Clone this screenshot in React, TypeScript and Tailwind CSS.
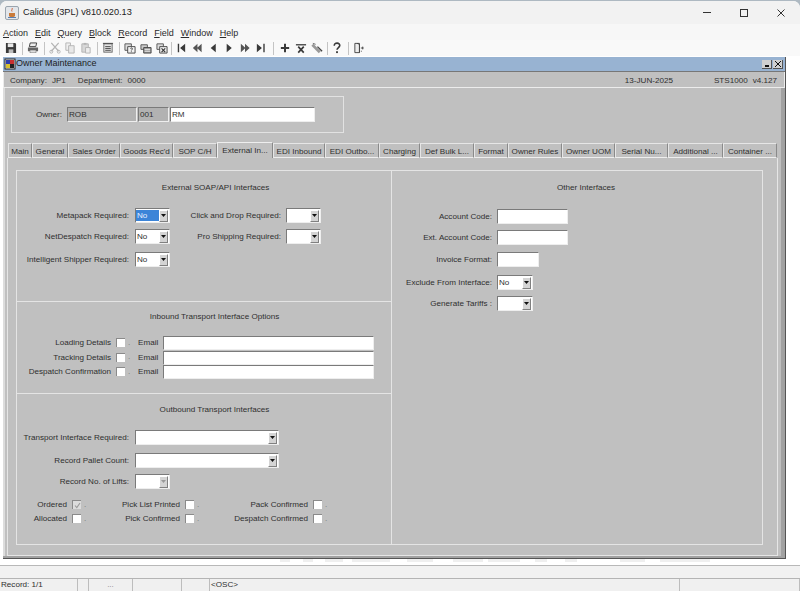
import type { ReactNode } from 'react'

const tabs = [
  { label: 'Main', width: 'w-[24px]' },
  { label: 'General', width: 'w-[36px]' },
  { label: 'Sales Order', width: 'w-[52px]' },
  { label: "Goods Rec'd", width: 'w-[53px]' },
  { label: 'SOP C/H', width: 'w-[44px]' },
  { label: 'External In...', width: 'w-[56px]', active: true },
  { label: 'EDI Inbound', width: 'w-[52px]' },
  { label: 'EDI Outbo...', width: 'w-[54px]' },
  { label: 'Charging', width: 'w-[41px]' },
  { label: 'Def Bulk L...', width: 'w-[54px]' },
  { label: 'Format', width: 'w-[34px]' },
  { label: 'Owner Rules', width: 'w-[54px]' },
  { label: 'Owner UOM', width: 'w-[53px]' },
  { label: 'Serial Nu...', width: 'w-[53px]' },
  { label: 'Additional ...', width: 'w-[55px]' },
  { label: 'Container ...', width: 'w-[54px]' },
]

const menus = ['Action', 'Edit', 'Query', 'Block', 'Record', 'Field', 'Window', 'Help']

function Ico({ children, w = 'w-[16px]' }: { children: ReactNode; w?: string }) {
  return (
    <div className={`${w} h-[16px] flex items-center justify-center shrink-0`}>
      <svg width="12" height="12" viewBox="0 0 13 13">
        {children}
      </svg>
    </div>
  )
}

function Sep({ w }: { w: string }) {
  return (
    <div className={`${w} h-[16px] flex items-center justify-center shrink-0`}>
      <div className="w-[1px] h-[13px] bg-[#c4c4c4]" />
    </div>
  )
}

function Toolbar() {
  const dark = '#3a3a3a'
  const off = '#b4b4b4'
  return (
    <div className="h-[16px] flex pl-[3px] bg-[#f9f9f9]">
      <Ico>
        <path d="M1 1h10l1 1v10H1z" fill={dark} />
        <rect x="3" y="1.500" width="6" height="4" fill="#e8e8e8" />
        <rect x="4" y="8" width="5" height="4" fill="#bbb" />
      </Ico>
      <Sep w="w-[6px]" />
      <Ico>
        <path d="M3.500 1h7l-1 4h-7z" fill="#eee" stroke={dark} />
        <path d="M1 6h11v4h-2v2H3v-2H1z" fill="#666" />
        <rect x="3.500" y="9" width="6" height="2.500" fill="#ddd" />
      </Ico>
      <Sep w="w-[6px]" />
      <Ico w="w-[15px]">
        <path d="M2.500 1l8 9M10.500 1l-8 9" stroke={off} strokeWidth="1.300" fill="none" />
        <circle cx="2.500" cy="10.500" r="1.600" fill="none" stroke={off} />
        <circle cx="10.500" cy="10.500" r="1.600" fill="none" stroke={off} />
      </Ico>
      <Ico>
        <path d="M2 1h5v8H2z" fill="#f0f0f0" stroke={off} />
        <path d="M5 4h6v8H5z" fill="#e8e8e8" stroke={off} />
      </Ico>
      <Ico>
        <path d="M2 2h7v9H2z" fill="#d8d8d8" stroke={off} />
        <rect x="4" y="1" width="3" height="2" fill={off} />
        <path d="M6 6h5v6H6z" fill="#eee" stroke={off} />
      </Ico>
      <Sep w="w-[6px]" />
      <Ico>
        <rect x="2" y="2" width="9" height="9" fill="#e4e4e4" stroke="#666" />
        <path d="M1 1.500h11M3.500 5h6M3.500 7h6M3.500 9h6" stroke="#444" fill="none" />
      </Ico>
      <Sep w="w-[6px]" />
      <Ico>
        <path d="M1 2h7v7H1z" fill="#ddd" stroke="#555" />
        <path d="M4 5h8v7H4z" fill="#f2f2f2" stroke="#444" />
        <path d="M7 7c1-1 2.500-.5 2 .8-.3.6-1 .6-1 1.400M8 10.200v.8" stroke="#333" fill="none" />
      </Ico>
      <Ico>
        <path d="M1 3h7v5H1z" fill="#ccc" stroke="#555" />
        <path d="M4 6h8v6H4z" fill="#999" stroke="#444" />
        <path d="M5 8h6M5 10h6" stroke="#eee" fill="none" />
      </Ico>
      <Ico>
        <path d="M1 2h7v6H1z" fill="#ddd" stroke="#555" />
        <path d="M4 5h8v7H4z" fill="#eee" stroke="#444" />
        <path d="M6 7l4 4M10 7l-4 4" stroke="#333" strokeWidth="1.200" fill="none" />
      </Ico>
      <Sep w="w-[3px]" />
      <Ico>
        <path d="M3 2h1.500v9H3zM11 2v9L5.500 6.500z" fill={dark} />
      </Ico>
      <Ico>
        <path d="M7 2v9L2 6.500zM11.500 2v9L6.500 6.500z" fill="#555" />
      </Ico>
      <Ico>
        <path d="M9.500 2v9L4 6.500z" fill={dark} />
      </Ico>
      <Ico>
        <path d="M4 2v9l5.500-4.500z" fill={dark} />
      </Ico>
      <Ico>
        <path d="M2 2v9l5-4.500zM6.500 2v9l5-4.500z" fill="#555" />
      </Ico>
      <Ico>
        <path d="M2 2v9l5.500-4.500zM9 2h1.500v9H9z" fill={dark} />
      </Ico>
      <Sep w="w-[8px]" />
      <Ico>
        <path d="M6.500 2v9M2 6.500h9" stroke={dark} strokeWidth="2.200" fill="none" />
      </Ico>
      <Ico>
        <path d="M1 3h11" stroke="#555" strokeWidth="1.500" fill="none" />
        <path d="M3.500 5l6 6.500M9.500 5l-6 6.500" stroke={dark} strokeWidth="1.800" fill="none" />
      </Ico>
      <Ico>
        <path d="M1.500 3l8 8" stroke="#999" strokeWidth="3" fill="none" />
        <path d="M7 5l5 5" stroke="#444" strokeWidth="1.500" fill="none" />
        <path d="M2 1.500l3 1" stroke="#666" fill="none" />
      </Ico>
      <Sep w="w-[4px]" />
      <Ico>
        <path d="M3.500 4c0-4 6.500-3.500 6 0-.3 2-3 2.200-3 4.500" stroke={dark} strokeWidth="1.700" fill="none" />
        <rect x="5.500" y="10" width="2" height="2" fill={dark} />
      </Ico>
      <Sep w="w-[6px]" />
      <Ico>
        <path d="M2 1.500h5v10H2z" fill="#eee" stroke="#444" />
        <path d="M4.500 1.500l2.500 1v9" stroke="#444" fill="none" />
        <path d="M8.500 6.500h3M10.500 5v3M8.500 10h1" stroke="#444" fill="none" />
      </Ico>
    </div>
  )
}

function Arrow({ disabled }: { disabled?: boolean }) {
  return (
    <div className="w-[9px] h-[12px] shrink-0 bg-[#d4d4d4] border-t border-l border-t-white border-l-white border-b border-r border-b-[#808080] border-r-[#808080] flex items-center justify-center">
      <svg width="5" height="3" viewBox="0 0 5 3">
        <path d="M0 0h5L2.500 3z" fill={disabled ? '#999' : '#111'} />
      </svg>
    </div>
  )
}

function Select({
  value,
  width,
  highlight,
  disabled,
}: {
  value?: string
  width: string
  highlight?: boolean
  disabled?: boolean
}) {
  return (
    <div
      className={`${width} h-[15px] shrink-0 flex items-center justify-between pr-[1px] bg-white border-t border-l border-t-[#7a7a7a] border-l-[#7a7a7a] border-b border-r border-b-[#eeeeee] border-r-[#eeeeee]`}
    >
      <div
        className={
          highlight
            ? 'h-[11px] w-[23px] bg-[#3b84d8] text-[#e8f0ff] pl-[1px] leading-[11px]'
            : 'pl-[1px] leading-[11px]'
        }
      >
        {value}
      </div>
      <Arrow disabled={disabled} />
    </div>
  )
}

function Input({
  width,
  value,
  bg = 'bg-white',
  height = 'h-[15px]',
}: {
  width: string
  value?: string
  bg?: string
  height?: string
}) {
  return (
    <div
      className={`${width} ${height} shrink-0 pl-[1px] leading-[13px] ${bg} border-t border-l border-t-[#7a7a7a] border-l-[#7a7a7a] border-b border-r border-b-[#eeeeee] border-r-[#eeeeee]`}
    >
      {value}
    </div>
  )
}

function Label({ width, children }: { width: string; children: ReactNode }) {
  return <div className={`${width} shrink-0 pt-[1px] text-right whitespace-nowrap`}>{children}</div>
}

function Check({ label, width, checked }: { label: string; width: string; checked?: boolean }) {
  return (
    <div className="flex items-center">
      <Label width={width}>{label}</Label>
      <div
        className={`ml-[5px] w-[9px] h-[9px] shrink-0 border-t border-l border-t-[#8a8a8a] border-l-[#8a8a8a] flex items-center justify-center ${
          checked ? 'bg-[#dcdcdc]' : 'bg-white'
        }`}
      >
        {checked && (
          <svg width="7" height="7" viewBox="0 0 7 7">
            <path d="M1 3.500l1.800 2L6 1" stroke="#9a9a9a" strokeWidth="1.100" fill="none" />
          </svg>
        )}
      </div>
      <div className="w-[8px] pl-[3px] text-[#777]">.</div>
    </div>
  )
}

function ExternalSection() {
  return (
    <div className="h-[131px] border-b border-[#e4e4e4]">
      <div className="pt-[11px] h-[37px] pl-[23px] text-center">External SOAP/API Interfaces</div>
      <div className="flex items-center h-[15px]">
        <Label width="w-[112px]">Metapack Required:</Label>
        <div className="ml-[6px]">
          <Select value="No" width="w-[35px]" highlight />
        </div>
        <Label width="w-[111px]">Click and Drop Required:</Label>
        <div className="ml-[5px]">
          <Select width="w-[35px]" />
        </div>
      </div>
      <div className="flex items-center h-[15px] mt-[6px]">
        <Label width="w-[112px]">NetDespatch Required:</Label>
        <div className="ml-[6px]">
          <Select value="No" width="w-[35px]" />
        </div>
        <Label width="w-[111px]">Pro Shipping Required:</Label>
        <div className="ml-[5px]">
          <Select width="w-[35px]" />
        </div>
      </div>
      <div className="flex items-center h-[15px] mt-[8px]">
        <Label width="w-[112px]">Intelligent Shipper Required:</Label>
        <div className="ml-[6px]">
          <Select value="No" width="w-[35px]" />
        </div>
      </div>
    </div>
  )
}

function InboundSection() {
  const rows = ['Loading Details', 'Tracking Details', 'Despatch Confirmation']
  return (
    <div className="h-[92px] border-b border-[#e4e4e4]">
      <div className="pt-[9px] h-[34px] pl-[21px] text-center">Inbound Transport Interface Options</div>
      <div className="flex flex-col gap-[0.500px]">
        {rows.map((row) => (
          <div key={row} className="flex items-center h-[14px]">
            <Check label={row} width="w-[94px]" />
            <div className="ml-[5px] pt-[1px] w-[25px] shrink-0">Email</div>
            <Input width="w-[211px]" height="h-[14px]" />
          </div>
        ))}
      </div>
    </div>
  )
}

function OutboundSection() {
  return (
    <div className="h-[150px]">
      <div className="pt-[10px] h-[36px] pl-[21px] text-center">Outbound Transport Interfaces</div>
      <div className="flex items-center h-[15px]">
        <Label width="w-[112px]">Transport Interface Required:</Label>
        <div className="ml-[6px]">
          <Select width="w-[144px]" />
        </div>
      </div>
      <div className="flex items-center h-[15px] mt-[8px]">
        <Label width="w-[112px]">Record Pallet Count:</Label>
        <div className="ml-[6px]">
          <Select width="w-[144px]" />
        </div>
      </div>
      <div className="flex items-center h-[15px] mt-[6px]">
        <Label width="w-[112px]">Record No. of Lifts:</Label>
        <div className="ml-[6px]">
          <Select width="w-[35px]" disabled />
        </div>
      </div>
      <div className="flex items-center h-[14px] mt-[9px]">
        <Check label="Ordered" width="w-[50px]" checked />
        <Check label="Pick List Printed" width="w-[91px]" />
        <Check label="Pack Confirmed" width="w-[106px]" />
      </div>
      <div className="flex items-center h-[14px]">
        <Check label="Allocated" width="w-[50px]" />
        <Check label="Pick Confirmed" width="w-[91px]" />
        <Check label="Despatch Confirmed" width="w-[106px]" />
      </div>
    </div>
  )
}

function OtherInterfaces() {
  const labelWidth = 'w-[100px]'
  return (
    <div className="flex-1">
      <div className="pt-[11px] h-[38px] pl-[18px] text-center">Other Interfaces</div>
      <div className="flex items-center h-[15px]">
        <Label width={labelWidth}>Account Code:</Label>
        <div className="ml-[5px]">
          <Input width="w-[71px]" />
        </div>
      </div>
      <div className="flex items-center h-[15px] mt-[6px]">
        <Label width={labelWidth}>Ext. Account Code:</Label>
        <div className="ml-[5px]">
          <Input width="w-[71px]" />
        </div>
      </div>
      <div className="flex items-center h-[15px] mt-[7px]">
        <Label width={labelWidth}>Invoice Format:</Label>
        <div className="ml-[5px]">
          <Input width="w-[42px]" />
        </div>
      </div>
      <div className="flex items-center h-[15px] mt-[8px]">
        <Label width={labelWidth}>Exclude From Interface:</Label>
        <div className="ml-[5px]">
          <Select value="No" width="w-[36px]" />
        </div>
      </div>
      <div className="flex items-center h-[15px] mt-[6px]">
        <Label width={labelWidth}>Generate Tariffs :</Label>
        <div className="ml-[5px]">
          <Select width="w-[36px]" />
        </div>
      </div>
    </div>
  )
}

function InnerWindow() {
  return (
    <div className="w-[783px] h-[502px] flex flex-col border-r border-b border-r-[#555555] border-b-[#555555] bg-[#c0c0c0]">
      <div className="h-[15px] flex items-center bg-[#98b3d2] border-b border-[#777777] shrink-0">
        <svg width="12" height="12" viewBox="0 0 12 12" className="ml-[1px] shrink-0">
          <rect x="1" y="1" width="10" height="10" fill="#f4f4f4" stroke="#222" />
          <rect x="2" y="2" width="4" height="4" fill="#2f3fb0" />
          <rect x="6" y="2" width="4" height="4" fill="#c83030" />
          <rect x="2" y="6" width="4" height="4" fill="#d8c030" />
          <rect x="6" y="6" width="4" height="4" fill="#222" />
        </svg>
        <div className="text-[9px] text-[#222]">Owner Maintenance</div>
        <div className="ml-auto flex gap-[1px] pr-[2px]">
          <div className="w-[10px] h-[9px] bg-[#d0d0d0] border-r border-b border-[#555] flex items-end justify-center pb-[1px]">
            <div className="w-[4px] h-[2px] bg-[#111]" />
          </div>
          <div className="w-[10px] h-[9px] bg-[#d0d0d0] border-r border-b border-[#555] flex items-center justify-center">
            <svg width="6" height="6" viewBox="0 0 6 6">
              <path d="M0 0l6 6M6 0L0 6" stroke="#111" fill="none" />
            </svg>
          </div>
        </div>
      </div>

      <div className="h-[16px] shrink-0 flex items-center pt-[3px] pl-[6px] pr-[7px] border-b border-l border-r border-[#ececec]">
        <div>Company:</div>
        <div className="ml-[5px]">JP1</div>
        <div className="ml-[12px]">Department:</div>
        <div className="ml-[5px]">0000</div>
        <div className="ml-auto">13-JUN-2025</div>
        <div className="ml-[41px]">STS1000</div>
        <div className="ml-[5px]">v4.127</div>
      </div>

      <div className="flex-1 flex border-r-[4px] border-b-[2px] border-[#a2a2a2]">
        <div className="flex-1 pl-[1px] border-l-[2px] border-[#dddddd]">
          <div className="ml-[5px] mt-[8px] w-[333px] h-[37px] flex items-center border border-[#e2e2e2]">
            <Label width="w-[50px]">Owner:</Label>
            <div className="ml-[5px] flex gap-[1px]">
              <Input width="w-[70px]" value="ROB" bg="bg-[#b2b2b2]" />
              <Input width="w-[31px]" value="001" bg="bg-[#b2b2b2]" />
              <Input width="w-[145px]" value="RM" />
            </div>
          </div>

          <div className="mt-[9px] ml-[2px] flex h-[16px] items-end">
            {tabs.map((tab) => (
              <div
                key={tab.label}
                className={
                  tab.active
                    ? `${tab.width} h-[16px] shrink-0 text-center leading-[15px] whitespace-nowrap overflow-hidden bg-[#c0c0c0] border-t border-l border-[#eeeeee] border-r-[#888888] border-r`
                    : `${tab.width} h-[15px] shrink-0 text-center leading-[15px] whitespace-nowrap overflow-hidden bg-[#c0c0c0] border-t border-l border-[#e6e6e6] border-r border-r-[#8a8a8a] border-b border-b-[#eeeeee]`
                }
              >
                {tab.label}
              </div>
            ))}
          </div>

          <div className="ml-[1px] w-[771px] h-[398px] pl-[8px] pt-[12px] border-l border-r border-[#e6e6e6] border-b">
            <div className="w-[747px] h-[375px] flex border border-[#e4e4e4]">
              <div className="w-[375px] shrink-0 flex flex-col border-r border-[#e4e4e4]">
                <ExternalSection />
                <InboundSection />
                <OutboundSection />
              </div>
              <OtherInterfaces />
            </div>
          </div>
        </div>
      </div>
    </div>
  )
}

function StatusBar() {
  const cells = [
    { text: 'Record: 1/1', width: 'w-[78px]' },
    { text: '', width: 'w-[11px]' },
    { text: '...', width: 'w-[44px]', center: true },
    { text: '', width: 'w-[49px]' },
    { text: '', width: 'w-[28px]' },
    { text: '<OSC>', width: 'w-[470px]' },
    { text: '', width: 'flex-1' },
  ]
  return (
    <div className="h-[14px] flex bg-[#f0f0f0] border-t border-[#b4b4b4]">
      {cells.map((cell, i) => (
        <div
          key={i}
          className={`${cell.width} ${cell.center ? 'text-center text-[#888]' : 'pl-[1px]'} leading-[12px] border-r border-[#bdbdbd] whitespace-nowrap`}
        >
          {cell.text}
        </div>
      ))}
    </div>
  )
}

export default function App() {
  return (
    <div className="w-[800px] h-[591px] overflow-hidden pt-[1px] bg-[#aeb9c2] text-[8.100px] text-[#2f2f2f] font-['Liberation_Sans',Arial,sans-serif]">
      <div className="h-[590px] flex flex-col rounded-t-[7px] overflow-hidden bg-white">
        <div className="h-[23px] shrink-0 flex items-center bg-[#f2f2f2]">
          <svg width="14" height="14" viewBox="0 0 14 14" className="ml-[5px] shrink-0">
            <rect x="0.500" y="0.500" width="13" height="13" rx="1.500" fill="#e3e6ea" stroke="#9aa4ae" />
            <path d="M4 7h6v2.500c0 1-1 1.500-3 1.500s-3-.5-3-1.500z" fill="#c97a3a" />
            <path d="M7 2c1 1-1 2 0 3.500" stroke="#d05a30" fill="none" />
            <path d="M3 11.500h8" stroke="#5a7fb0" fill="none" />
          </svg>
          <div className="ml-[4px] text-[9.200px] text-[#222]">Calidus (3PL) v810.020.13</div>
          <div className="ml-auto flex items-center gap-[29px] pr-[15px]">
            <div className="w-[8px] h-[1px] bg-[#333]" />
            <div className="w-[8px] h-[8px] border border-[#333]" />
            <svg width="8" height="8" viewBox="0 0 8 8">
              <path d="M0.500 0.500l7 7M7.500 0.500l-7 7" stroke="#333" fill="none" />
            </svg>
          </div>
        </div>

        <div className="h-[16px] shrink-0 flex items-center gap-[7px] pt-[3px] pl-[3px] text-[9px] text-[#2a2a2a] bg-[#f7f7f7]">
          {menus.map((menu) => (
            <div key={menu}>
              <span className="underline">{menu[0]}</span>
              {menu.slice(1)}
            </div>
          ))}
        </div>

        <Toolbar />
        <div className="h-[1px] shrink-0 bg-white" />

        <div className="pl-[3px] shrink-0">
          <InnerWindow />
        </div>

        <div className="h-[6px] shrink-0 bg-white">
          <svg width="800" height="6" viewBox="0 0 800 6" className="block">
            <g fill="#efefef">
              <rect x="280" y="0" width="10" height="3" />
              <rect x="303" y="0" width="10" height="3" />
              <rect x="325" y="0" width="18" height="3" />
              <rect x="352" y="0" width="38" height="3" />
              <rect x="407" y="0" width="26" height="3" />
              <rect x="453" y="0" width="30" height="3" />
              <rect x="488" y="0" width="32" height="3" />
              <rect x="535" y="0" width="12" height="3" />
              <rect x="565" y="0" width="12" height="3" />
              <rect x="620" y="0" width="25" height="3" />
              <rect x="660" y="0" width="50" height="3" />
            </g>
          </svg>
        </div>

        <div className="h-[13px] shrink-0 bg-[#f1f1f1] border-t border-[#b8b8b8]" />
        <StatusBar />
      </div>
    </div>
  )
}
